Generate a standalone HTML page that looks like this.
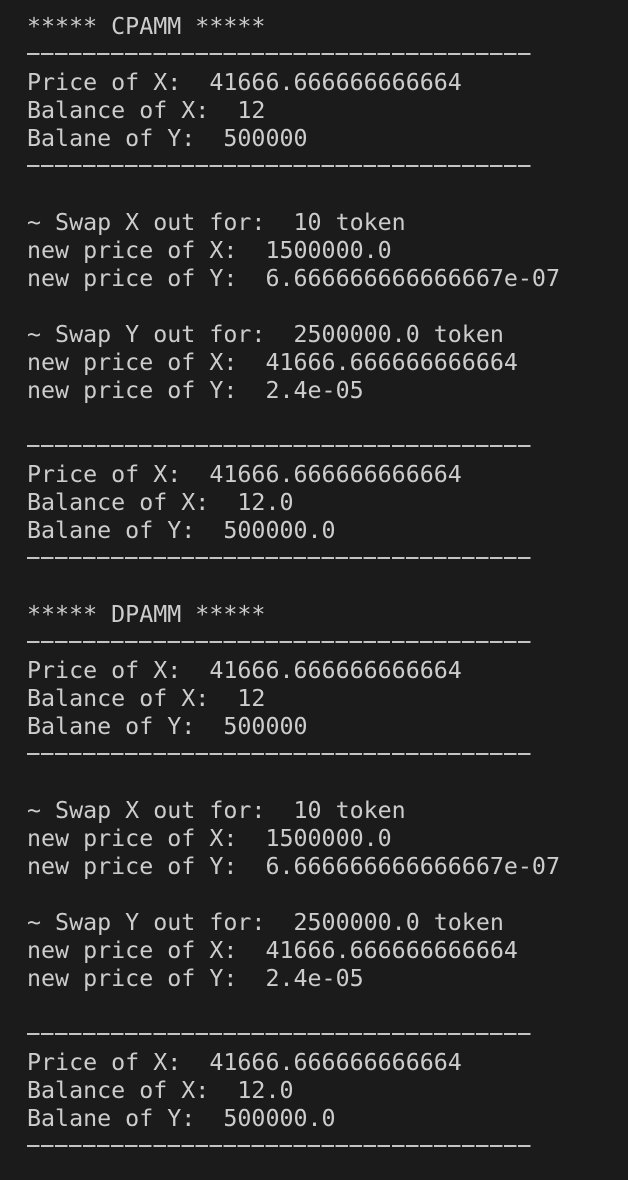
<!DOCTYPE html>
<html><head><meta charset="utf-8"><style>
html,body{margin:0;padding:0;background:#1b1b1b;width:628px;height:1180px;overflow:hidden}
pre{margin:0;padding:13px 0 0 27px;font-family:"DejaVu Sans Mono","Liberation Mono",monospace;font-size:23.3px;line-height:28px;color:#cccccc}
.d{display:inline-block;width:505px;height:28px;vertical-align:top;background:repeating-linear-gradient(90deg,#c4c4c4 0 12.5px,transparent 12.5px 14.03px) 0 12px/505px 2px no-repeat}
</style></head><body><pre>***** CPAMM *****
<span class="d"></span>
Price of X:  41666.666666666664
Balance of X:  12
Balane of Y:  500000
<span class="d"></span>

~ Swap X out for:  10 token
new price of X:  1500000.0
new price of Y:  6.666666666666667e-07

~ Swap Y out for:  2500000.0 token
new price of X:  41666.666666666664
new price of Y:  2.4e-05

<span class="d"></span>
Price of X:  41666.666666666664
Balance of X:  12.0
Balane of Y:  500000.0
<span class="d"></span>

***** DPAMM *****
<span class="d"></span>
Price of X:  41666.666666666664
Balance of X:  12
Balane of Y:  500000
<span class="d"></span>

~ Swap X out for:  10 token
new price of X:  1500000.0
new price of Y:  6.666666666666667e-07

~ Swap Y out for:  2500000.0 token
new price of X:  41666.666666666664
new price of Y:  2.4e-05

<span class="d"></span>
Price of X:  41666.666666666664
Balance of X:  12.0
Balane of Y:  500000.0
<span class="d"></span></pre></body></html>
